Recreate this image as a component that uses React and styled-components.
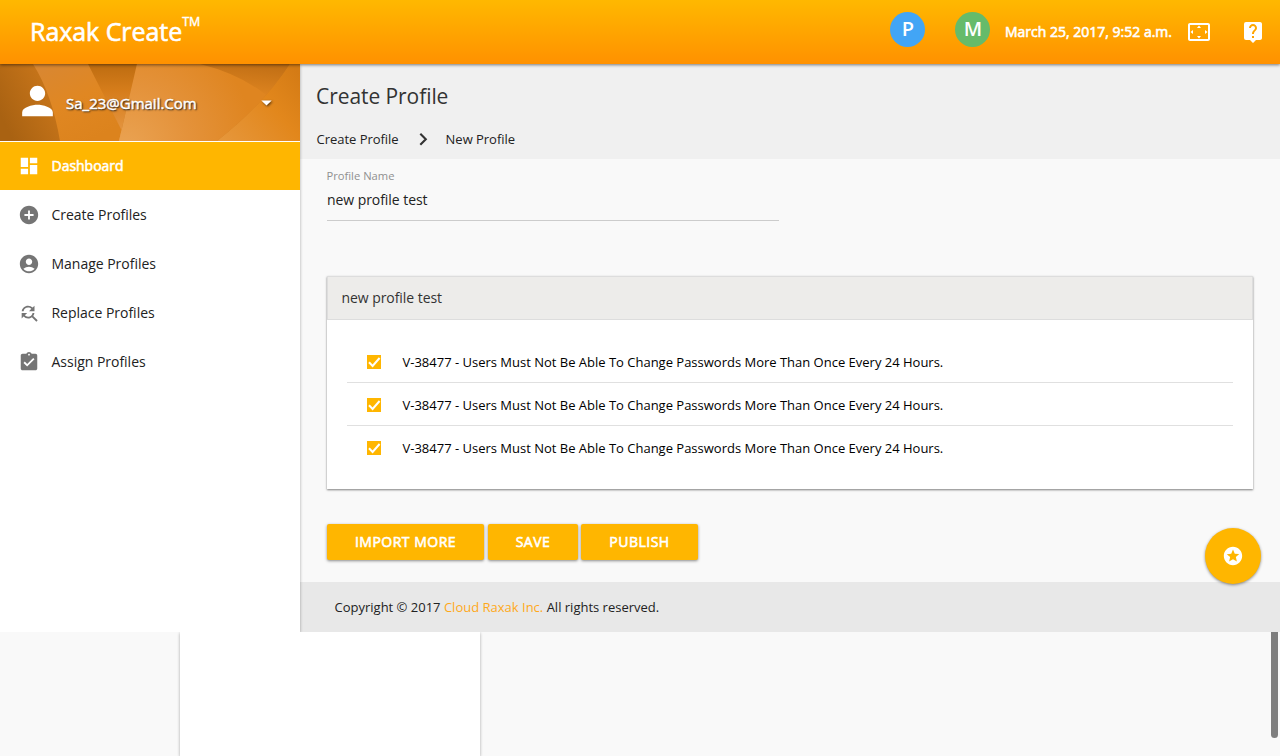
import React from "react";
import styled, { createGlobalStyle } from "styled-components";
import {
  MdDashboard,
  MdAddCircle,
  MdAccountCircle,
  MdFindReplace,
  MdAssignmentTurnedIn,
  MdPerson,
  MdArrowDropDown,
  MdSettingsOverscan,
  MdLiveHelp,
  MdStars,
} from "react-icons/md";

const Global = createGlobalStyle`
  * { box-sizing: border-box; }
  body { margin: 0; overflow: hidden; background: #f9f9f9; font-family: "Open Sans", "Noto Sans", sans-serif; color: #222; }
`;

const Page = styled.div`
  width: 1280px;
  height: 756px;
  display: flex;
  flex-direction: column;
  overflow: hidden;
`;

const Header = styled.header`
  position: relative;
  z-index: 3;
  flex: none;
  height: 64px;
  padding: 0 15px 0 30px;
  display: flex;
  justify-content: space-between;
  background: linear-gradient(#ffb800, #ff9100);
  box-shadow: 0 1px 3px rgba(0, 0, 0, 0.5);
  color: #fff;
`;

const Brand = styled.h1`
  margin: 0;
  font-size: 25px;
  font-weight: 400;
  line-height: 62px;
  letter-spacing: -0.05px;
  white-space: nowrap;
  -webkit-text-stroke: 0.6px #fff;
`;

const Mark = styled.sup`
  font-size: 12.5px;
  line-height: 0;
  position: relative;
  top: -6px;
  vertical-align: super;
  -webkit-text-stroke: 0.4px #fff;
`;

const Tools = styled.div`
  display: flex;
  align-items: center;
`;

const Avatar = styled.span`
  width: 35px;
  height: 35px;
  margin: 0 ${(p) => p.$gap}px 5px 0;
  padding-left: 1px;
  border-radius: 50%;
  background: ${(p) => p.$color};
  font-size: 20px;
  font-weight: 600;
  line-height: 34px;
  text-align: center;
`;

const Stamp = styled.span`
  width: 182px;
  padding-bottom: 1px;
  font-size: 14px;
  font-weight: 400;
  white-space: nowrap;
  -webkit-text-stroke: 0.6px #fff;
`;

const ToolIcon = styled.span`
  display: flex;
  width: 24px;
  margin-right: ${(p) => p.$gap || 0}px;
  svg { width: 24px; height: 24px; }
`;

const Body = styled.div`
  flex: none;
  height: 568px;
  display: flex;
`;

const Sidebar = styled.aside`
  position: relative;
  z-index: 2;
  flex: none;
  width: 300px;
  background: #fff;
  box-shadow: 0 1px 3px rgba(0, 0, 0, 0.32);
  clip-path: inset(0 -6px 0 0);
`;

const UserPanel = styled.div`
  position: relative;
  height: 77px;
  padding: 0 21px 0 14px;
  display: flex;
  align-items: center;
  color: #fff;
`;

const Backdrop = styled.svg`
  position: absolute;
  inset: 0;
  width: 300px;
  height: 77px;
`;

const UserIcon = styled(MdPerson)`
  position: relative;
  flex: none;
  width: 47px;
  height: 46px;
  margin-bottom: 3px;
`;

const UserName = styled.span`
  position: relative;
  flex: 1;
  margin-left: 5px;
  padding-top: 1px;
  font-size: 15px;
  -webkit-text-stroke: 0.45px #fff;
  text-shadow: 1px 1px 2px #222, 1px 1px 1px rgba(0, 0, 0, 0.4);
`;

const Caret = styled(MdArrowDropDown)`
  position: relative;
  width: 25px;
  height: 25px;
  filter: drop-shadow(1px 1px 1px rgba(0, 0, 0, 0.6));
`;

const NavItem = styled.a`
  height: 48px;
  margin-top: 1px;
  padding-left: 18px;
  display: flex;
  align-items: center;
  font-size: 14px;
  color: ${(p) => (p.$active ? "#fff" : "#222")};
  background: ${(p) => (p.$active ? "#ffb600" : "transparent")};
  -webkit-text-stroke: ${(p) => (p.$active ? "0.55px #fff" : "0")};
  svg {
    width: 22px;
    height: 22px;
    margin-right: 11.5px;
    color: ${(p) => (p.$active ? "#fff" : "#757575")};
  }
`;

const NavLabel = styled.span`
  padding-bottom: 2px;
  letter-spacing: -0.02px;
`;

const Main = styled.main`
  flex: 1;
  display: flex;
  flex-direction: column;
`;

const Heading = styled.section`
  flex: none;
  height: 95px;
  padding: 16px;
  background: #f0f0f0;
`;

const Title = styled.h2`
  margin: 0;
  font-size: 21px;
  font-weight: 400;
  line-height: 32px;
  letter-spacing: -0.07px;
  color: #333;
`;

const Crumbs = styled.nav`
  display: flex;
  align-items: center;
  height: 20px;
  margin-top: 17px;
  padding-left: 0.5px;
  font-size: 13px;
  line-height: 20px;
  letter-spacing: -0.03px;
`;

const Chevron = styled.svg`
  width: 9px;
  height: 14px;
  margin: 0 18px 1px 20px;
`;

const Content = styled.section`
  flex: 1;
  padding: 8px 27px 0 27px;
`;

const Field = styled.label`
  display: block;
  width: 452px;
  height: 54px;
  border-bottom: 1px solid #ccc;
`;

const FieldLabel = styled.span`
  display: block;
  margin-left: -0.5px;
  font-size: 11.2px;
  line-height: 18px;
  color: #909090;
`;

const FieldValue = styled.span`
  display: block;
  margin-top: 5px;
  font-size: 14px;
  line-height: 20px;
  letter-spacing: -0.06px;
`;

const Card = styled.div`
  height: 213px;
  margin-top: 55px;
  background: #fff;
  box-shadow: 0 1px 2px rgba(0, 0, 0, 0.5);
`;

const CardHeader = styled.div`
  height: 44px;
  padding-left: 13.5px;
  border: 1px solid #ddd;
  background: #edecea;
  font-size: 14px;
  line-height: 42px;
  letter-spacing: -0.06px;
  color: #333;
`;

const Rules = styled.div`
  padding: 20px;
`;

const Rule = styled.div`
  height: 43px;
  padding: 2px 0 0 20px;
  display: flex;
  align-items: center;
  border-bottom: 1px solid #e0e0e0;
  font-size: 13px;
  letter-spacing: -0.005px;
  color: #000;
  &:last-child { border-bottom-color: transparent; }
`;

const Check = styled.svg`
  width: 14px;
  height: 14px;
  margin: 0 21.5px 1px 0;
`;

const Actions = styled.div`
  display: flex;
  margin-top: 35px;
`;

const Button = styled.button`
  width: ${(p) => p.$width}px;
  height: 36px;
  margin-right: ${(p) => p.$gap || 0}px;
  padding: 0 0 2px;
  border: 0;
  border-radius: 2px;
  background: #ffb600;
  box-shadow: 0 1px 3px rgba(0, 0, 0, 0.45);
  color: #fff;
  font: 400 14px "Open Sans", "Noto Sans", sans-serif;
  letter-spacing: 0.5px;
  -webkit-text-stroke: 0.6px #fff;
`;

const Footer = styled.footer`
  flex: none;
  height: 50px;
  padding-left: 34.5px;
  background: #e8e8e8;
  font-size: 13px;
  line-height: 50px;
  a { color: #ffa81a; }
`;

const Fab = styled.button`
  position: absolute;
  z-index: 4;
  left: 1205px;
  top: 528px;
  width: 56px;
  height: 56px;
  padding: 0;
  border: 0;
  border-radius: 50%;
  display: grid;
  place-items: center;
  background: #ffb600;
  box-shadow: 0 1px 3px rgba(0, 0, 0, 0.45);
  color: #fff;
  svg { width: 22px; height: 22px; }
`;

const Lower = styled.div`
  flex: 1;
  display: flex;
  justify-content: space-between;
  padding: 0 2px 0 180px;
  overflow: hidden;
`;

const Drawer = styled.div`
  width: 300px;
  background: #fff;
  box-shadow: 0 1px 3px rgba(0, 0, 0, 0.32);
`;

const ScrollThumb = styled.div`
  width: 7px;
  height: 106px;
  border-radius: 0 0 4px 4px;
  background: #7e7e7e;
`;

const NAV = [
  { icon: MdDashboard, label: "Dashboard", active: true },
  { icon: MdAddCircle, label: "Create Profiles" },
  { icon: MdAccountCircle, label: "Manage Profiles" },
  { icon: MdFindReplace, label: "Replace Profiles" },
  { icon: MdAssignmentTurnedIn, label: "Assign Profiles" },
];

const RULES = Array(3).fill(
  "V-38477 - Users Must Not Be Able To Change Passwords More Than Once Every 24 Hours."
);

function UserBackdrop() {
  return (
    <Backdrop viewBox="0 0 300 77" preserveAspectRatio="none" aria-hidden="true">
      <defs>
        <linearGradient id="base" gradientUnits="userSpaceOnUse" x1="0" y1="50" x2="60" y2="20">
          <stop offset="0" stopColor="#a96212" />
          <stop offset="1" stopColor="#cc781b" />
        </linearGradient>
        <linearGradient id="ray" gradientUnits="userSpaceOnUse" x1="50" y1="0" x2="90" y2="77">
          <stop offset="0" stopColor="#d98731" />
          <stop offset=".5" stopColor="#e08722" />
          <stop offset="1" stopColor="#dc831d" />
        </linearGradient>
        <linearGradient id="mid" gradientUnits="userSpaceOnUse" x1="115" y1="0" x2="115" y2="77">
          <stop offset="0" stopColor="#bd6c10" />
          <stop offset=".35" stopColor="#d67d1b" />
          <stop offset="1" stopColor="#e79a49" />
        </linearGradient>
        <radialGradient id="fold" gradientUnits="userSpaceOnUse" cx="125" cy="85" r="130">
          <stop offset="0" stopColor="#eaa353" />
          <stop offset=".5" stopColor="#e4923a" />
          <stop offset="1" stopColor="#df8520" />
        </radialGradient>
        <linearGradient id="dark" x1=".8" y1="0" x2=".5" y2="1">
          <stop offset="0" stopColor="#b86811" />
          <stop offset="1" stopColor="#b86811" stopOpacity="0" />
        </linearGradient>
        <linearGradient id="edge" gradientUnits="userSpaceOnUse" x1="220" y1="77" x2="300" y2="10">
          <stop offset="0" stopColor="#e6973c" />
          <stop offset=".6" stopColor="#e2871c" />
          <stop offset="1" stopColor="#d47b15" />
        </linearGradient>
      </defs>
      <rect width="300" height="77" fill="url(#base)" />
      <path d="M33 0H90L127 77H60Q52 30 33 0Z" fill="url(#ray)" />
      <path d="M88 0H137L119 77H127Z" fill="url(#mid)" />
      <path d="M137 0H290Q262 42 217 77H119Z" fill="url(#fold)" />
      <path d="M200 0H290Q280 16 266 31Q240 10 200 0Z" fill="url(#dark)" opacity=".8" />
      <path d="M290 0H300V77H217Q262 42 290 0Z" fill="url(#edge)" />
    </Backdrop>
  );
}

export default function App() {
  return (
    <Page>
      <Global />
      <Header>
        <Brand>Raxak Create<Mark>TM</Mark></Brand>
        <Tools>
          <Avatar $color="#42a5f5" $gap={30}>P</Avatar>
          <Avatar $color="#66bb6a" $gap={15}>M</Avatar>
          <Stamp>March 25, 2017, 9:52 a.m.</Stamp>
          <ToolIcon $gap={30}><MdSettingsOverscan /></ToolIcon>
          <ToolIcon><MdLiveHelp /></ToolIcon>
        </Tools>
      </Header>
      <Body>
        <Sidebar>
          <UserPanel>
            <UserBackdrop />
            <UserIcon />
            <UserName>Sa_23@Gmail.Com</UserName>
            <Caret />
          </UserPanel>
          {NAV.map(({ icon: Icon, label, active }) => (
            <NavItem key={label} $active={active}>
              <Icon />
              <NavLabel>{label}</NavLabel>
            </NavItem>
          ))}
        </Sidebar>
        <Main>
          <Heading>
            <Title>Create Profile</Title>
            <Crumbs>
              <span>Create Profile</span>
              <Chevron viewBox="0 0 9 14">
                <path d="M1.3 1.7L6.8 7.2L1.3 12.7" fill="none" stroke="#333" strokeWidth="2.1" />
              </Chevron>
              <span>New Profile</span>
            </Crumbs>
          </Heading>
          <Content>
            <Field>
              <FieldLabel>Profile Name</FieldLabel>
              <FieldValue>new profile test</FieldValue>
            </Field>
            <Card>
              <CardHeader>new profile test</CardHeader>
              <Rules>
                {RULES.map((text, i) => (
                  <Rule key={i}>
                    <Check viewBox="0 0 14 14">
                      <rect width="14" height="14" fill="#ffb600" />
                      <path d="M2 7.3L5.6 11L12.6 3" fill="none" stroke="#fff" strokeWidth="2" />
                    </Check>
                    <span>{text}</span>
                  </Rule>
                ))}
              </Rules>
            </Card>
            <Actions>
              <Button $width={157} $gap={4}>IMPORT MORE</Button>
              <Button $width={90} $gap={3}>SAVE</Button>
              <Button $width={117}>PUBLISH</Button>
            </Actions>
          </Content>
          <Footer>
            Copyright © 2017 <a>Cloud Raxak Inc.</a> All rights reserved.
          </Footer>
        </Main>
      </Body>
      <Lower>
        <Drawer />
        <ScrollThumb />
      </Lower>
      <Fab aria-label="Favourites"><MdStars /></Fab>
    </Page>
  );
}
